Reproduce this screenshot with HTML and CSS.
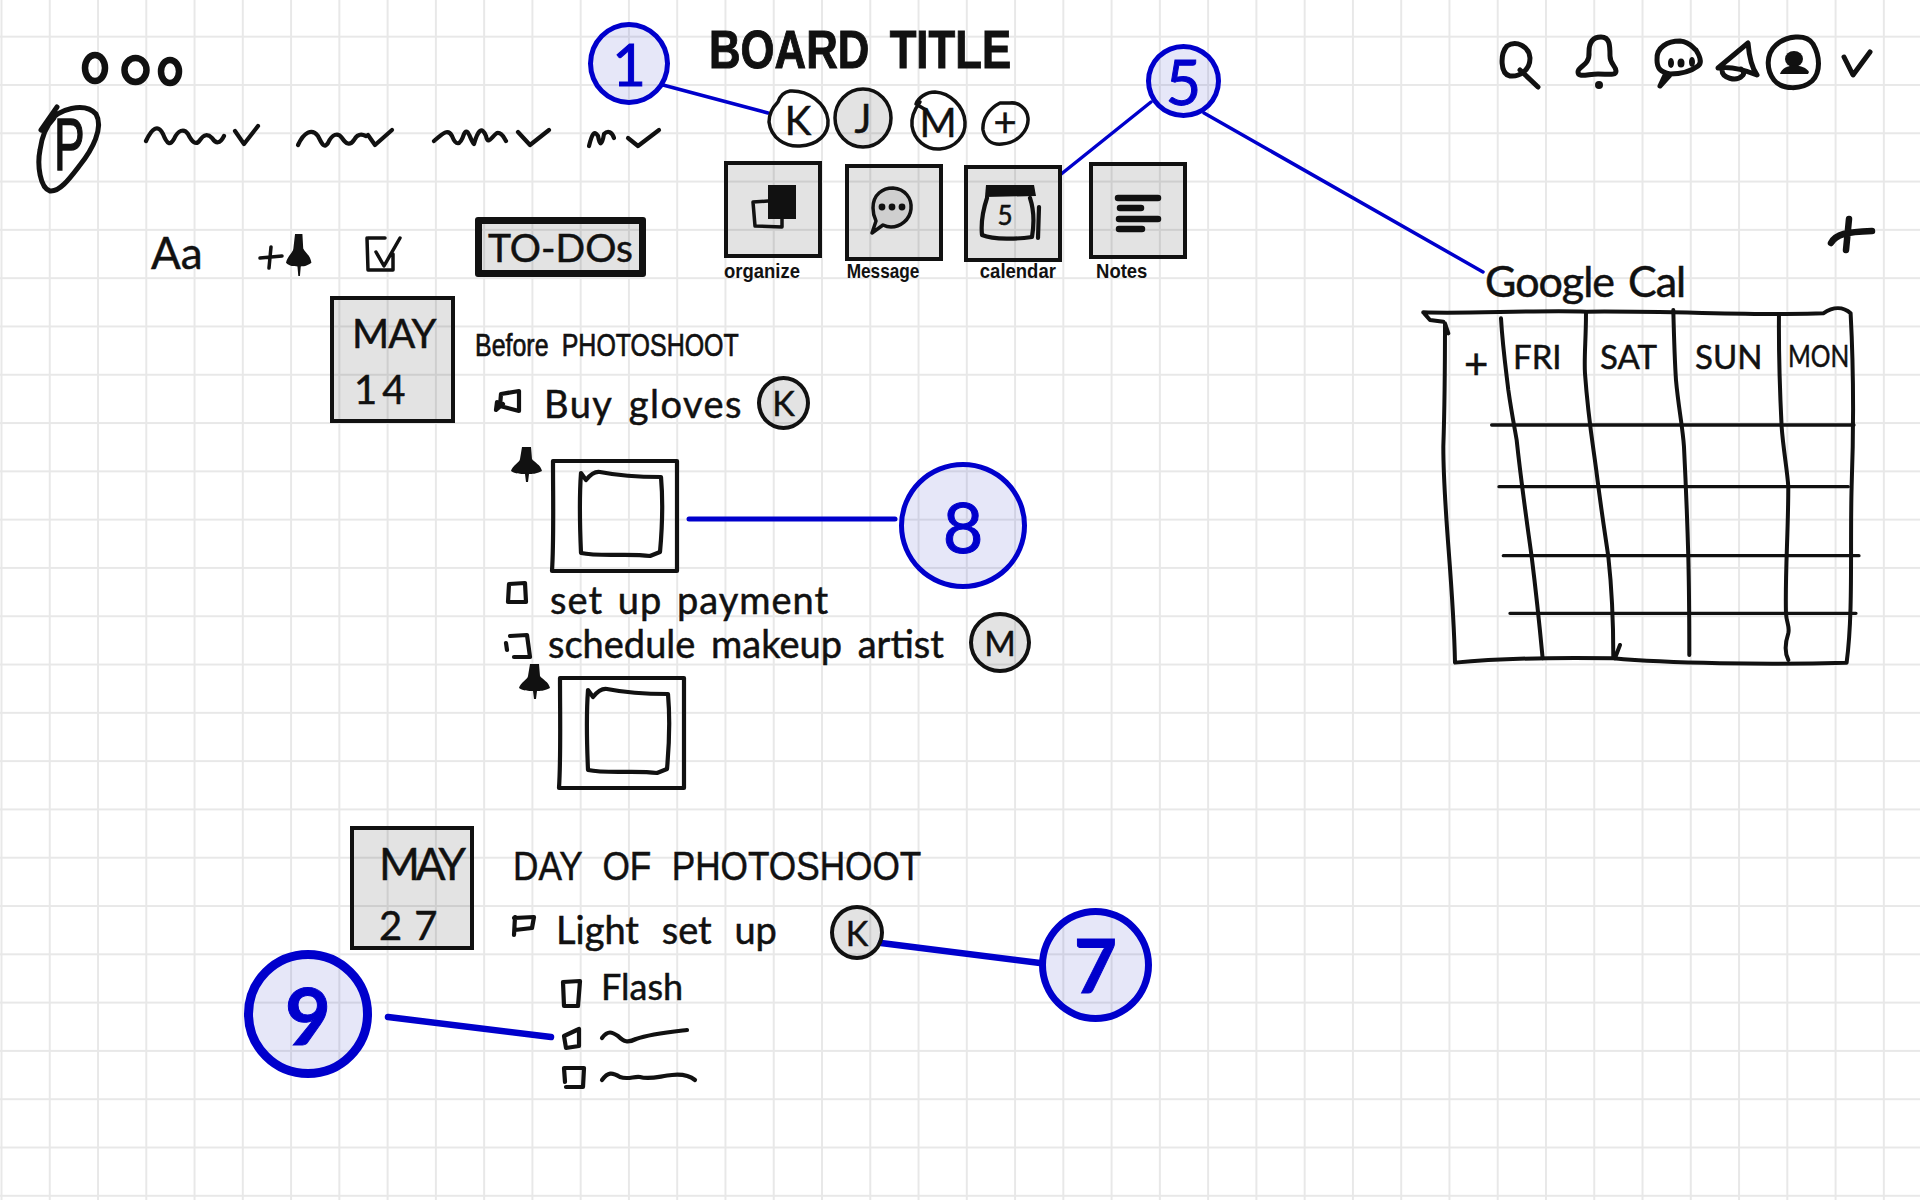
FILE: index.html
```html
<!DOCTYPE html>
<html lang="en">
<head>
    <meta charset="UTF-8">
    <title>Board wireframe</title>
    <link rel="stylesheet" href="styles.css">
</head>
<body>
<div class="board">
    <!-- all the pen strokes live in one drawing, same coordinates as the page -->
    <svg class="sketch" viewBox="0 0 1920 1200" width="1920" height="1200">
        <defs>
            <path id="pin" d="M11 0 h9 l1 12 c2 3 9 6 10 12 c-6 3 -10 3 -13 3 l-1 8 h-2 l-1 -8 c-4 0 -10 0 -14 -3 c1 -5 9 -9 9 -12 z"/>
            <g id="photo">
                <path d="M554 461 L677 461 L677 571 L552 571 C554 540 553 500 553 461"/>
                <path d="M581 473 L586 480 C590 475 594 471 600 472 C620 476 640 477 661 477 C663 500 662 530 660 552 L650 556 C630 553 600 557 581 553 C580 530 579 500 581 473 Z"/>
            </g>
        </defs>

        <!-- annotation lines -->
        <g class="note-line">
            <path class="w3" d="M663 85 L768 113"/>
            <path class="w3" d="M1151 102 L1060 175"/>
            <path class="w3" d="M1204 113 L1483 272"/>
            <path class="w5" d="M689 519 L895 519"/>
            <path class="w6" d="M881 943 L1040 963"/>
            <path class="w6" d="M388 1017 L551 1037"/>
        </g>

        <!-- window dots and logo -->
        <g class="pen w6">
            <ellipse cx="95" cy="68" rx="10" ry="13"/>
            <ellipse cx="135.5" cy="70" rx="11" ry="12"/>
            <ellipse cx="170" cy="71.5" rx="9" ry="11.5"/>
        </g>
        <path class="pen w5" d="M57 107 L41 130 M47 124 C58 108 85 102 96 114 C104 128 92 150 80 165 C70 178 60 192 50 191 C40 188 37 165 40 150 C42 135 47 125 54 118"/>

        <!-- scribbled menu -->
        <g class="pen w4">
            <path d="M146 141 C152 128 158 124 163 134 C167 144 170 146 174 139 C178 130 184 128 188 134 C192 142 196 146 200 140 C204 134 208 134 212 138 C216 144 220 144 224 136 M235 131 L244 144 L258 126"/>
            <path d="M298 145 C304 132 312 128 318 136 C322 144 324 149 328 143 C332 134 338 132 342 138 C346 144 350 146 354 140 C358 133 362 134 366 136 M368 135 L375 145 L392 130"/>
            <path d="M434 141 C442 134 448 128 452 136 C456 146 460 146 464 134 C468 126 470 140 474 144 C478 130 482 126 486 136 C488 146 492 136 497 133 C502 132 504 138 506 141 M518 132 L530 145 L549 130"/>
            <path d="M589 146 C592 134 594 130 598 136 C600 146 602 146 604 134 C608 130 612 132 614 138 M628 138 L638 146 L659 130"/>
        </g>

        <!-- toolbar -->
        <path class="pen w3" d="M260 258 L282 256 M271 247 L269 268"/>
        <use href="#pin" class="ink" transform="translate(286 234) scale(.82 1.2)"/>
        <path class="pen w3" d="M368 238 L385 238 M367 238 L368 270 L393 270 L393 254 M376 252 L384 266 L400 238"/>

        <!-- people on the board -->
        <g class="pen w3">
            <path d="M778 102 C772 108 769 114 769 122 C771 138 785 147 800 146 C818 145 829 134 828 120 C826 103 808 90 790 91 C784 92 780 96 778 102"/>
            <ellipse class="grey" cx="863" cy="118" rx="28" ry="29"/>
            <path d="M920 102 C914 110 911 118 912 126 C914 140 926 150 940 149 C955 148 966 136 965 122 C964 106 950 93 935 92 C926 92 918 98 916 104 L926 110"/>
            <path d="M1000 103 C990 108 982 118 983 130 C985 140 992 145 1002 144 C1018 143 1029 130 1028 118 C1027 108 1018 102 1010 103 L1000 103"/>
        </g>

        <!-- top right icons -->
        <g class="pen w5">
            <path d="M1507 46 C1516 40 1529 46 1530 58 C1530 70 1520 77 1510 76 C1500 74 1500 54 1507 46 Z M1520 70 L1538 87"/>
            <path d="M1578 72 C1578 66 1590 66 1589 52 C1589 42 1593 37 1601 37 C1610 37 1610 46 1610 56 C1610 64 1616 66 1616 71 C1616 76 1608 74 1598 74 C1588 74 1578 78 1578 72 Z"/>
            <path d="M1657 60 C1656 47 1668 41 1680 41 C1690 42 1692 47 1696 50 C1701 58 1702 63 1698 66 C1690 72 1680 74 1670 74 C1660 72 1657 68 1657 60 Z M1666 73 L1660 86 L1670 75"/>
            <path d="M1718 68 L1748 43 C1749 55 1752 68 1757 75 C1745 70 1730 66 1718 68 Z M1722 70 C1722 78 1736 82 1742 76 C1745 74 1743 70 1741 69"/>
            <path d="M1776 45 C1786 36 1806 33 1813 44 C1820 56 1821 72 1812 81 C1802 90 1782 90 1774 80 C1766 70 1766 54 1776 45 Z"/>
            <path d="M1844 57 L1853 75 L1870 52"/>
            <path class="w6" d="M1831 243 C1836 234 1846 232 1872 231 M1849 219 L1846 250"/>
        </g>
        <g class="ink">
            <circle cx="1599" cy="85" r="4"/>
            <ellipse cx="1671" cy="63" rx="3" ry="5"/>
            <ellipse cx="1681" cy="63" rx="3.5" ry="4.5"/>
            <ellipse cx="1692" cy="62" rx="3" ry="5"/>
            <ellipse cx="1794" cy="59" rx="9" ry="8"/>
            <path d="M1780 74 C1783 63 1804 63 1809 72 L1808 74 Z"/>
        </g>

        <!-- checkboxes and short scribbled tasks -->
        <g class="pen w4">
            <path d="M501 394 L519 391 L519 411 L500 406 Z M497 402 L496 410 L503 404"/>
            <path d="M509 584 L525 583 L526 602 L508 602 Z"/>
            <path d="M510 636 L527 635 L530 657 L514 657 M506 643 L507 650"/>
            <path d="M514 918 L534 917 L532 928 L515 930 M515 917 L514 935"/>
            <path d="M563 982 L580 981 L578 1006 L564 1006 Z"/>
            <path d="M564 1036 L579 1029 L579 1046 L566 1048 Z"/>
            <path d="M564 1068 L584 1068 L583 1087 L566 1087 M564 1068 L565 1082"/>
            <path d="M602 1038 C608 1030 612 1032 618 1036 C624 1042 628 1043 636 1039 C650 1034 670 1032 687 1030"/>
            <path d="M602 1080 C608 1072 612 1072 620 1077 C628 1080 634 1076 640 1077 C650 1080 660 1076 672 1075 C682 1074 690 1076 695 1080"/>
        </g>

        <!-- photos and pins -->
        <use href="#photo" class="pen w4"/>
        <use href="#photo" class="pen w4" transform="translate(7 217)"/>
        <use href="#pin" class="ink" transform="translate(511 447)"/>
        <use href="#pin" class="ink" transform="translate(519 664)"/>

        <!-- google calendar, traced in 3x coordinates -->
        <g class="pen table" transform="translate(1400 280) scale(.3333)">
            <path d="M70 97 C200 102 400 90 560 95 C800 92 1100 108 1270 100 C1300 80 1330 80 1352 100 C1360 250 1362 430 1355 620 C1350 800 1360 1000 1340 1148 C1100 1155 800 1150 640 1135 C450 1132 300 1135 165 1148 C160 900 130 700 130 500 C135 350 135 250 135 130 L145 160 M70 97 L90 120 L130 125"/>
            <path d="M303 115 C308 200 318 270 325 330 C335 400 345 450 350 480 C365 620 380 720 395 830 C410 950 420 1050 428 1135"/>
            <path d="M558 100 C558 180 552 230 555 280 C565 420 580 500 590 580 C605 700 618 780 625 830 C635 920 640 1020 640 1130 M660 1095 L645 1135"/>
            <path d="M820 90 C822 170 824 240 828 300 C835 380 848 440 852 500 C858 620 862 720 865 830 C868 950 868 1050 868 1125"/>
            <path d="M1137 105 C1136 220 1140 340 1145 440 C1150 510 1162 570 1165 620 C1165 760 1155 880 1158 1000 C1160 1030 1170 1040 1165 1060 C1155 1090 1155 1120 1165 1140"/>
            <path class="rule" d="M275 435 L1362 435 M297 620 L1345 620 M310 827 L1377 827 M330 1000 L1368 1000"/>
        </g>
    </svg>

    <!-- header -->
    <h1 class="label board-title">BOARD TITLE</h1>
    <span class="label logo-p">P</span>
    <span class="label font-aa">Aa</span>
    <div class="todo-tab label">TO-DOs</div>

    <span class="label initial in-k">K</span>
    <span class="label initial in-j">J</span>
    <span class="label initial in-m">M</span>
    <span class="label initial in-plus">+</span>

    <div class="tools">
        <div class="tool">
            <div class="tool-box">
                <svg viewBox="4 4 90 89">
                    <rect class="ink" x="44" y="24" width="28" height="34"/>
                    <path class="pen w3" d="M44 40 L29 41 L31 65 L58 66 L58 58"/>
                </svg>
            </div>
            <span class="tool-name">organize</span>
        </div>
        <div class="tool">
            <div class="tool-box">
                <svg viewBox="4 4 90 89">
                    <path class="pen w3 bubble" d="M28 44 C28 30 38 24 48 24 C60 25 67 34 66 45 C65 56 55 63 46 63 C42 63 40 62 38 61 L27 69 L31 57 C29 53 28 49 28 44 Z"/>
                    <circle class="ink" cx="37" cy="43" r="3.4"/>
                    <circle class="ink" cx="47" cy="43" r="3.4"/>
                    <circle class="ink" cx="57" cy="43" r="3.4"/>
                </svg>
            </div>
            <span class="tool-name">Message</span>
        </div>
        <div class="tool">
            <div class="tool-box">
                <svg viewBox="4 4 90 89">
                    <path class="ink" d="M22 20 L70 20 L72 31 L21 32 Z"/>
                    <path class="pen w4" d="M23 33 C19 45 17 60 18 70 C30 75 55 74 68 72 C70 60 70 45 66 33 M75 42 L74 73"/>
                    <text class="cal-num" x="41" y="60">5</text>
                </svg>
            </div>
            <span class="tool-name">calendar</span>
        </div>
        <div class="tool">
            <div class="tool-box">
                <svg viewBox="4 4 90 89">
                    <path class="pen w6" d="M29 36 L69 36 M31 46 L52 46 M30 57 L69 57 M30 67 L53 67"/>
                </svg>
            </div>
            <span class="tool-name">Notes</span>
        </div>
    </div>

    <!-- first list -->
    <div class="date-card date-one label">
        <span class="date-month">MAY</span>
        <span class="date-day">14</span>
    </div>
    <span class="label list-head head-before">Before PHOTOSHOOT</span>
    <div class="task task-gloves label">
        <span class="task-text">Buy gloves</span>
        <span class="who">K</span>
    </div>
    <div class="task task-payment label">
        <span class="task-text">set up payment</span>
    </div>
    <div class="task task-artist label">
        <span class="task-text">schedule makeup artist</span>
        <span class="who">M</span>
    </div>

    <!-- second list -->
    <div class="date-card date-two label">
        <span class="date-month">MAY</span>
        <span class="date-day">27</span>
    </div>
    <span class="label list-head head-day">DAY OF PHOTOSHOOT</span>
    <div class="task task-light label">
        <span class="task-text">Light set up</span>
        <span class="who">K</span>
    </div>
    <div class="task task-flash label">
        <span class="task-text">Flash</span>
    </div>

    <!-- calendar labels -->
    <span class="label cal-title">Google Cal</span>
    <div class="cal-days label">
        <span class="cal-add">+</span>
        <span class="day-fri">FRI</span>
        <span class="day-sat">SAT</span>
        <span class="day-sun">SUN</span>
        <span class="day-mon">MON</span>
    </div>

    <!-- numbered callouts -->
    <div class="badge badge-1">1</div>
    <div class="badge badge-5">5</div>
    <div class="badge badge-8">8</div>
    <div class="badge badge-7">7</div>
    <div class="badge badge-9">9</div>
</div>
</body>
</html>
```

FILE: styles.css
```css
body {
    margin: 0;
    background-color: #ffffff;
}

/* graph paper */
.board {
    position: relative;
    width: 1920px;
    height: 1200px;
    overflow: hidden;
    background-image:
        linear-gradient(to right, #e8e8e8 2px, transparent 2px),
        linear-gradient(to bottom, #e8e8e8 2px, transparent 2px);
    background-size: 48.28px 48.3px;
    background-position: 0.5px 35.7px;
    font-family: "Lato", "Liberation Sans", sans-serif;
    color: #111111;
}

.sketch {
    position: absolute;
    left: 0;
    top: 0;
}

.pen {
    fill: none;
    stroke: #111111;
    stroke-linecap: round;
    stroke-linejoin: round;
}
.ink { fill: #111111; }
.grey { fill: rgba(0, 0, 0, 0.11); }
.w3 { stroke-width: 3.5px; }
.w4 { stroke-width: 4.2px; }
.w5 { stroke-width: 5px; }
.w6 { stroke-width: 6.5px; }
.table { stroke-width: 12px; }
.table .rule { stroke-width: 10px; }
.bubble { fill: #cfcfcf; }

.note-line path {
    fill: none;
    stroke: #0000cc;
    stroke-linecap: round;
}

/* free canvas, each label sits where it was drawn */
.label {
    position: absolute;
    margin: 0;
    line-height: 1;
    white-space: nowrap;
    -webkit-text-stroke: 0.5px #111111;
}

.board-title {
    left: 709px;
    top: 22px;
    font-family: "Liberation Sans", sans-serif;
    font-size: 54px;
    font-weight: 700;
    word-spacing: 10px;
    transform: scaleX(0.81);
    transform-origin: left center;
    -webkit-text-stroke: 1px #111111;
}

.logo-p {
    left: 54px;
    top: 108px;
    font-size: 74px;
    font-family: "Liberation Sans", sans-serif;
    transform: scaleX(0.62);
    transform-origin: left center;
    -webkit-text-stroke: 1.5px #111111;
}

.font-aa {
    left: 151px;
    top: 230px;
    font-size: 44px;
}

.todo-tab {
    left: 475px;
    top: 217px;
    box-sizing: border-box;
    width: 171px;
    height: 60px;
    border: 7px solid #111111;
    border-radius: 3px;
    background-color: rgba(0, 0, 0, 0.11);
    font-size: 39px;
    display: flex;
    align-items: center;
    justify-content: center;
}

.initial {
    font-size: 40px;
    width: 50px;
    text-align: center;
}
.in-k { left: 773px; top: 100px; }
.in-j { left: 838px; top: 98px; }
.in-m { left: 913px; top: 102px; }
.in-plus { left: 980px; top: 102px; }

/* tool tiles */
.tools {
    position: absolute;
    left: 724px;
    top: 161px;
    display: flex;
    align-items: flex-start;
}
.tool {
    display: flex;
    flex-direction: column;
    width: 98px;
    margin-right: 23px;
}
.tool:nth-child(2) { margin-top: 3px; margin-right: 21px; }
.tool:nth-child(3) { margin-top: 4px; margin-right: 27px; }
.tool:nth-child(4) { margin-top: 1px; }

.tool-box {
    box-sizing: border-box;
    width: 98px;
    height: 97px;
    border: 4px solid #111111;
    background-color: rgba(0, 0, 0, 0.11);
}
.tool-box svg {
    display: block;
    width: 90px;
    height: 89px;
}
.tool-name {
    margin-top: 3px;
    font-family: "Liberation Sans", sans-serif;
    font-size: 21px;
    font-weight: 700;
    line-height: 20px;
    white-space: nowrap;
    transform: scaleX(0.88);
    transform-origin: left center;
}
.tool:nth-child(2) .tool-name { margin-top: 0; padding-left: 2px; transform: scaleX(0.82); }
.tool:nth-child(3) .tool-name { margin-top: -1px; padding-left: 18px; transform: scaleX(0.88); }
.tool:nth-child(4) .tool-name { margin-top: 2px; padding-left: 8px; }

.cal-num {
    font-size: 26px;
    text-anchor: middle;
    fill: #111111;
    stroke: #111111;
    stroke-width: 0.6px;
}

/* date cards */
.date-card {
    box-sizing: border-box;
    display: flex;
    flex-direction: column;
    border: 4px solid #111111;
    background-color: rgba(0, 0, 0, 0.11);
}
.date-one {
    left: 330px;
    top: 296px;
    width: 125px;
    height: 127px;
    padding: 13px 0 0 18px;
    gap: 16px;
    font-size: 40px;
}
.date-two {
    left: 350px;
    top: 826px;
    width: 124px;
    height: 124px;
    padding: 11px 0 0 25px;
    gap: 20px;
    font-size: 44px;
}
.date-month { letter-spacing: -1px; }
.date-one .date-day { letter-spacing: 5px; padding-left: 2px; }
.date-two .date-month { letter-spacing: -4px; }
.date-two .date-day { font-size: 40px; letter-spacing: 12px; }

.list-head {
    font-family: "Liberation Sans", sans-serif;
    transform-origin: left center;
}
.head-before {
    left: 475px;
    top: 329px;
    font-size: 32px;
    word-spacing: 8px;
    transform: scaleX(0.78);
    -webkit-text-stroke: 0.7px #111111;
}
.head-day {
    left: 513px;
    top: 846px;
    font-size: 40px;
    word-spacing: 12px;
    transform: scaleX(0.88);
}

/* task rows */
.task {
    display: flex;
    align-items: center;
    font-size: 38px;
}
.who {
    box-sizing: border-box;
    display: flex;
    align-items: center;
    justify-content: center;
    border: 4px solid #111111;
    border-radius: 50%;
    background-color: rgba(0, 0, 0, 0.11);
    font-size: 34px;
}
.task-gloves { left: 544px; top: 376px; gap: 14px; letter-spacing: 1.5px; word-spacing: 5px; }
.task-gloves .who { width: 53px; height: 54px; letter-spacing: 0; }
.task-payment { left: 550px; top: 580px; letter-spacing: 1px; word-spacing: 4px; }
.task-artist { left: 548px; top: 612px; gap: 25px; word-spacing: 6px; }
.task-artist .who { width: 62px; height: 61px; }
.task-light { left: 556px; top: 905px; gap: 53px; word-spacing: 13px; }
.task-light .task-text { margin-top: -8px; }
.task-light .who { width: 54px; height: 55px; }
.task-flash { left: 601px; top: 968px; font-size: 36px; }

/* calendar */
.cal-title {
    left: 1485px;
    top: 259px;
    font-size: 43px;
    letter-spacing: -1px;
    word-spacing: 4px;
}
.cal-days {
    left: 1464px;
    top: 340px;
    display: flex;
    font-size: 33px;
}
.cal-add { width: 49px; font-size: 42px; margin-top: 2px; }
.day-fri { width: 87px; }
.day-sat { width: 95px; }
.day-sun { width: 93px; }
.day-mon { width: 60px; font-size: 30px; transform: scaleX(0.82); transform-origin: left center; }

/* blue callouts */
.badge {
    position: absolute;
    box-sizing: border-box;
    display: flex;
    align-items: center;
    justify-content: center;
    border-style: solid;
    border-color: #0000cc;
    border-radius: 50%;
    background-color: rgba(50, 60, 200, 0.12);
    color: #0000cc;
    font-weight: 400;
    line-height: 1;
    -webkit-text-stroke: 1px #0000cc;
}
.badge-1 { left: 588px; top: 22px; width: 82px; height: 83px; border-width: 5px; font-size: 58px; }
.badge-5 { left: 1146px; top: 44px; width: 75px; height: 74px; border-width: 5px; font-size: 61px; }
.badge-8 { left: 899px; top: 462px; width: 128px; height: 127px; border-width: 5.5px; font-size: 70px; }
.badge-7 { left: 1039px; top: 908px; width: 113px; height: 114px; border-width: 7px; font-size: 74px; font-weight: 700; }
.badge-9 { left: 244px; top: 950px; width: 128px; height: 128px; border-width: 9px; font-size: 79px; font-weight: 700; }
```
